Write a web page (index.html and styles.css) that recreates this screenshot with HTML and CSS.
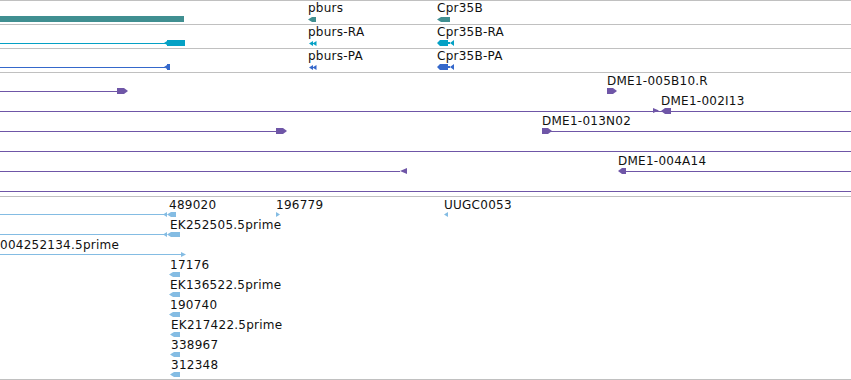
FILE: index.html
```html
<!DOCTYPE html>
<html lang="en">
<head>
    <meta charset="UTF-8">
    <title>Region view</title>
    <link rel="stylesheet" href="styles.css">
</head>
<body>
    <div class="browser">
        <!-- gene models -->
        <div class="track genes">
            <div class="row teal">
                <span class="bar" style="left:0;width:184px"></span>
                <span class="label" style="left:308px">pburs</span>
                <span class="glyph pt-l" style="left:308px;width:8px"></span>
                <span class="label" style="left:437px">Cpr35B</span>
                <span class="glyph pt-l" style="left:437px;width:13px"></span>
            </div>
            <div class="row cyan">
                <span class="line" style="left:0;width:166px"></span>
                <span class="bar nub-l" style="left:164px;width:21px"></span>
                <span class="label" style="left:308px">pburs-RA</span>
                <svg class="shape" style="left:309px" width="8" height="5" viewBox="0 0 8 5"><path d="M0 2.5L4 0V5Z M3.5 2.5L7.5 0V5Z"/></svg>
                <span class="label" style="left:437px">Cpr35B-RA</span>
                <svg class="shape" style="left:437px" width="17" height="6" viewBox="0 0 17 6"><path d="M0 3L3 0H11V6H3Z M11 2H13V4H11Z M13 3L17 0V6Z"/></svg>
            </div>
            <div class="row blue">
                <span class="line" style="left:0;width:165px"></span>
                <span class="bar nub-l" style="left:164px;width:6px"></span>
                <span class="label" style="left:308px">pburs-PA</span>
                <svg class="shape" style="left:309px" width="8" height="5" viewBox="0 0 8 5"><path d="M0 2.5L4 0V5Z M3.5 2.5L7.5 0V5Z"/></svg>
                <span class="label" style="left:437px">Cpr35B-PA</span>
                <svg class="shape" style="left:437px" width="17" height="6" viewBox="0 0 17 6"><path d="M0 3L3 0H11V6H3Z M11 2H13V4H11Z M13 3L17 0V6Z"/></svg>
            </div>
        </div>

        <!-- BAC ends -->
        <div class="track ests">
            <div class="row">
                <span class="line" style="left:0;width:118px"></span>
                <span class="glyph pt-r" style="left:117px;width:11px"></span>
                <span class="label" style="left:607px">DME1-005B10.R</span>
                <span class="glyph pt-r" style="left:607px;width:10px"></span>
            </div>
            <div class="row">
                <span class="line full"></span>
                <span class="glyph tri-r small" style="left:653px;width:6px"></span>
                <span class="label" style="left:661px">DME1-002I13</span>
                <span class="glyph pt-l" style="left:661px;width:10px"></span>
            </div>
            <div class="row">
                <span class="line" style="left:0;width:277px"></span>
                <span class="glyph pt-r" style="left:276px;width:11px"></span>
                <span class="label" style="left:542px">DME1-013N02</span>
                <span class="glyph pt-r" style="left:542px;width:10px"></span>
                <span class="line" style="left:550px;width:301px"></span>
            </div>
            <div class="row">
                <span class="line full"></span>
            </div>
            <div class="row">
                <span class="line" style="left:0;width:400px"></span>
                <span class="glyph tri-l" style="left:400px;width:7px"></span>
                <span class="label" style="left:618px">DME1-004A14</span>
                <span class="glyph pt-l" style="left:618px;width:8px"></span>
                <span class="line" style="left:624px;width:227px"></span>
            </div>
            <div class="row">
                <span class="line full"></span>
            </div>
        </div>

        <!-- cDNA / EST -->
        <div class="track cdna">
            <div class="row">
                <span class="line" style="left:0;width:165px"></span>
                <svg class="shape" style="left:163px" width="13" height="5" viewBox="0 0 13 5"><path d="M0 2.5L4 0V5Z M4 2.5L8 0V5Z M8 0H13V5H8Z"/></svg>
                <span class="label" style="left:169px">489020</span>
                <span class="label" style="left:276px">196779</span>
                <span class="glyph tri-r" style="left:276px;width:4px"></span>
                <span class="label" style="left:444px">UUGC0053</span>
                <span class="glyph tri-l" style="left:444px;width:4px"></span>
            </div>
            <div class="row">
                <span class="line" style="left:0;width:165px"></span>
                <svg class="shape" style="left:163px" width="17" height="5" viewBox="0 0 17 5"><path d="M0 2.5L4 0V5Z M4 2.5L8 0V5Z M8 0H17V5H8Z"/></svg>
                <span class="label" style="left:170px">EK252505.5prime</span>
            </div>
            <div class="row">
                <span class="label" style="left:0">004252134.5prime</span>
                <span class="line" style="left:0;width:182px"></span>
                <span class="glyph tri-r" style="left:181px;width:5px"></span>
            </div>
            <div class="row">
                <span class="label" style="left:170px">17176</span>
                <span class="glyph pt-l" style="left:169px;width:11px"></span>
            </div>
            <div class="row">
                <span class="label" style="left:170px">EK136522.5prime</span>
                <span class="glyph pt-l" style="left:169px;width:11px"></span>
            </div>
            <div class="row">
                <span class="label" style="left:170px">190740</span>
                <span class="glyph pt-l" style="left:169px;width:11px"></span>
            </div>
            <div class="row">
                <span class="label" style="left:171px">EK217422.5prime</span>
                <span class="glyph pt-l" style="left:170px;width:10px"></span>
            </div>
            <div class="row">
                <span class="label" style="left:171px">338967</span>
                <span class="glyph pt-l" style="left:170px;width:10px"></span>
            </div>
            <div class="row">
                <span class="label" style="left:171px">312348</span>
                <span class="glyph pt-l" style="left:170px;width:10px"></span>
            </div>
        </div>
    </div>
</body>
</html>
```

FILE: styles.css
```css
body {
    margin: 0;
    background-color: #fff;
    font-family: "DejaVu Sans", sans-serif;
    font-size: 12px;
    color: #000;
    overflow: hidden;
}
.browser {
    width: 851px;
}
.track {
    border-top: 1px solid #c0c0c0;
}
.row {
    position: relative;
    height: 20px;
}
.genes {
    border-top: none;
}
.genes .row {
    height: 23px;
    border-top: 1px solid #c0c0c0;
}
.teal { color: #408f91; }
.cyan { color: #05a1c5; }
.blue { color: #3568cb; }
.ests {
    padding-bottom: 3px;
    color: #6f56a7;
}
.cdna {
    padding-bottom: 2px;
    border-bottom: 1px solid #c0c0c0;
    color: #84bce3;
}
.label {
    position: absolute;
    top: 1px;
    line-height: 14px;
    letter-spacing: 0.25px;
    white-space: nowrap;
    color: #111;
}
.genes .label {
    top: 0;
}
.line {
    position: absolute;
    top: 18px;
    height: 1px;
    background-color: currentColor;
}
.line.full {
    left: 0;
    width: 100%;
}
.cdna .line {
    top: 17px;
}
.glyph, .bar {
    position: absolute;
    top: 15px;
    height: 6px;
    background-color: currentColor;
}
.genes .glyph, .cdna .glyph, .glyph.small {
    height: 5px;
}
.genes .glyph {
    top: 16px;
}
.shape {
    position: absolute;
    top: 16px;
    fill: currentColor;
}
.cyan .shape[height="6"], .blue .shape[height="6"] {
    top: 15px;
}
.cdna .shape {
    top: 15px;
}
.pt-l {
    clip-path: polygon(0 50%, 4px 0, 100% 0, 100% 100%, 4px 100%);
}
.pt-r {
    clip-path: polygon(0 0, calc(100% - 4px) 0, 100% 50%, calc(100% - 4px) 100%, 0 100%);
}
.tri-l {
    clip-path: polygon(0 50%, 100% 0, 100% 100%);
}
.tri-r {
    clip-path: polygon(0 0, 100% 50%, 0 100%);
}
.nub-l {
    clip-path: polygon(0 50%, 3px 1px, 3px 0, 100% 0, 100% 100%, 3px 100%, 3px 5px);
}
```
